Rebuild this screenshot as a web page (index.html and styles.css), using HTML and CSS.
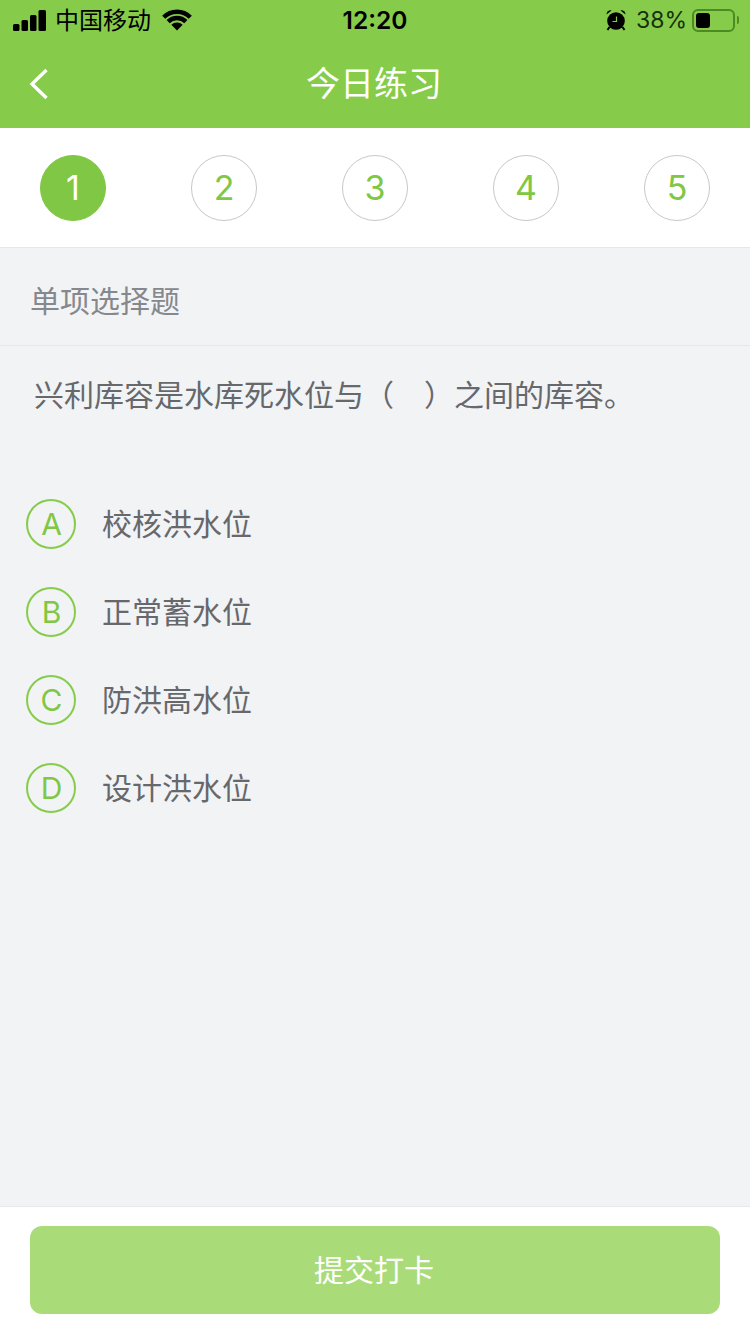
FILE: index.html
```html
<!DOCTYPE html>
<html lang="zh-CN">
<head>
    <meta charset="UTF-8">
    <meta name="viewport" content="width=device-width, initial-scale=1.0">
    <title>今日练习</title>
    <link rel="stylesheet" href="styles.css">
</head>
<body>
    <div class="page">
        <header class="top">
            <div class="status">
                <div class="status-l">
                    <svg class="signal" width="33" height="21" viewBox="0 0 33 21">
                        <rect x="0" y="14" width="6.500" height="7" rx="1.500"/>
                        <rect x="8.500" y="10" width="6.500" height="11" rx="1.500"/>
                        <rect x="17" y="5" width="6.500" height="16" rx="1.500"/>
                        <rect x="25.500" y="0" width="7.500" height="21" rx="1.500"/>
                    </svg>
                    <span class="carrier">中国移动</span>
                    <svg class="wifi" width="30" height="22" viewBox="0 0 30 22">
                        <path d="M15 21.500 L9.340 15.840 A8 8 0 0 1 20.660 15.840 Z"/>
                        <path d="M6.160 12.660 A12.500 12.500 0 0 1 23.840 12.660" fill="none" stroke="#000" stroke-width="4.400"/>
                        <path d="M1.700 8.200 A18.800 18.800 0 0 1 28.300 8.200" fill="none" stroke="#000" stroke-width="4.400"/>
                    </svg>
                </div>
                <div class="time">12:20</div>
                <div class="status-r">
                    <svg class="alarm" width="22" height="22" viewBox="0 0 22 22">
                        <circle cx="11" cy="12" r="8.800"/>
                        <path d="M1.500 5.500 A4 4 0 0 1 6.500 1.500 Z"/>
                        <path d="M20.500 5.500 A4 4 0 0 0 15.500 1.500 Z"/>
                        <path d="M4.500 18 L2.500 21 M17.500 18 L19.500 21" stroke="#000" stroke-width="2"/>
                        <path d="M11.500 7.500 V12.500 H7.500" fill="none" stroke="#86cc4a" stroke-width="1.200"/>
                    </svg>
                    <span class="percent">38%</span>
                    <div class="battery"><div class="battery-level"></div></div>
                    <div class="battery-cap"></div>
                </div>
            </div>
            <nav class="nav">
                <svg class="back" width="20" height="32" viewBox="0 0 20 32">
                    <path d="M17.500 2 L3 16 L17.500 30" fill="none" stroke="#fff" stroke-width="3.400"/>
                </svg>
                <h1 class="title">今日练习</h1>
            </nav>
        </header>

        <div class="steps">
            <div class="step current">1</div>
            <div class="step">2</div>
            <div class="step">3</div>
            <div class="step">4</div>
            <div class="step">5</div>
        </div>

        <main class="content">
            <div class="kind">单项选择题</div>
            <p class="question">兴利库容是水库死水位与（<span class="blank"></span>）之间的库容。</p>
            <ul class="options">
                <li><span class="letter">A</span><span class="option-text">校核洪水位</span></li>
                <li><span class="letter">B</span><span class="option-text">正常蓄水位</span></li>
                <li><span class="letter">C</span><span class="option-text">防洪高水位</span></li>
                <li><span class="letter">D</span><span class="option-text">设计洪水位</span></li>
            </ul>
        </main>

        <footer class="bottom">
            <button class="submit">提交打卡</button>
        </footer>
    </div>
</body>
</html>
```

FILE: styles.css
```css
* {
    margin: 0;
    padding: 0;
    box-sizing: border-box;
}

body {
    font-family: "Noto Sans CJK SC", "Liberation Sans", sans-serif;
    background: #f2f3f5;
}

.page {
    display: flex;
    flex-direction: column;
    width: 750px;
    height: 1334px;
    overflow: hidden;
}

.top {
    background: #86cc4a;
}

.status {
    display: flex;
    justify-content: space-between;
    align-items: center;
    position: relative;
    height: 40px;
    padding: 0 11px 0 13px;
    color: #000;
}

.status-l,
.status-r {
    display: flex;
    align-items: center;
}

.carrier {
    margin-left: 9px;
    font-size: 24px;
    line-height: 38px;
    margin-bottom: 2px;
}

.wifi {
    margin-left: 11px;
}

.time {
    position: absolute;
    left: 0;
    right: 0;
    text-align: center;
    font-family: "Inter", "Liberation Sans", sans-serif;
    font-size: 24.500px;
    font-weight: 600;
}

.percent {
    margin-left: 9px;
    font-family: "Inter", "Liberation Sans", sans-serif;
    font-size: 23px;
    color: #16300a;
}

.battery {
    margin-left: 5px;
    width: 43px;
    height: 23px;
    padding: 2px;
    border: 2px solid #4d8a24;
    border-radius: 6px;
}

.battery-level {
    width: 14px;
    height: 15px;
    background: #000;
    border-radius: 3px;
}

.battery-cap {
    margin-left: 2px;
    width: 2px;
    height: 8px;
    background: #4d8a24;
    border-radius: 0 2px 2px 0;
}

.nav {
    display: flex;
    align-items: center;
    justify-content: center;
    position: relative;
    height: 88px;
}

.back {
    position: absolute;
    left: 29px;
    top: 28px;
}

.title {
    font-size: 34px;
    font-weight: 400;
    color: #fff;
    margin: -5px 2px 0 0;
}

.steps {
    display: flex;
    justify-content: space-between;
    height: 120px;
    padding: 27px 40px 0;
    background: #fff;
    border-bottom: 1px solid #e6e7ea;
}

.step {
    width: 66px;
    height: 66px;
    line-height: 64px;
    text-align: center;
    font-family: "Inter", "Liberation Sans", sans-serif;
    font-size: 34px;
    color: #80c744;
    border: 1px solid #c8c8c8;
    border-radius: 50%;
}

.step.current {
    color: #fff;
    background: #7fc744;
    border-color: #7fc744;
}

.content {
    flex: 1;
}

.kind {
    height: 98px;
    padding: 0 30px;
    line-height: 103px;
    font-size: 30px;
    color: #85888c;
    border-bottom: 1px solid #e6e7ea;
}

.question {
    padding: 22px 34px 0;
    line-height: 50px;
    font-size: 30px;
    color: #66686c;
}

.blank {
    display: inline-block;
    width: 30px;
}

.options {
    list-style: none;
    margin-top: 81px;
    padding-left: 26px;
}

.options li {
    display: flex;
    align-items: center;
    height: 50px;
    margin-bottom: 38px;
    font-size: 30px;
    color: #66686c;
}

.option-text {
    padding-bottom: 4px;
}

.letter {
    width: 50px;
    height: 50px;
    margin-right: 26px;
    padding-left: 1px;
    line-height: 47px;
    text-align: center;
    font-family: "Inter", "Liberation Sans", sans-serif;
    font-size: 30px;
    color: #80c744;
    border: 2px solid #86cc4a;
    border-radius: 50%;
}

.bottom {
    height: 128px;
    padding: 19px 30px 0;
    background: #fff;
    border-top: 1px solid #e8e9ee;
}

.submit {
    display: block;
    width: 100%;
    height: 88px;
    padding: 0 2px 4px 0;
    font-family: inherit;
    font-size: 30px;
    color: #fff;
    background: #a9dc78;
    border: 0;
    border-radius: 12px;
}
```
